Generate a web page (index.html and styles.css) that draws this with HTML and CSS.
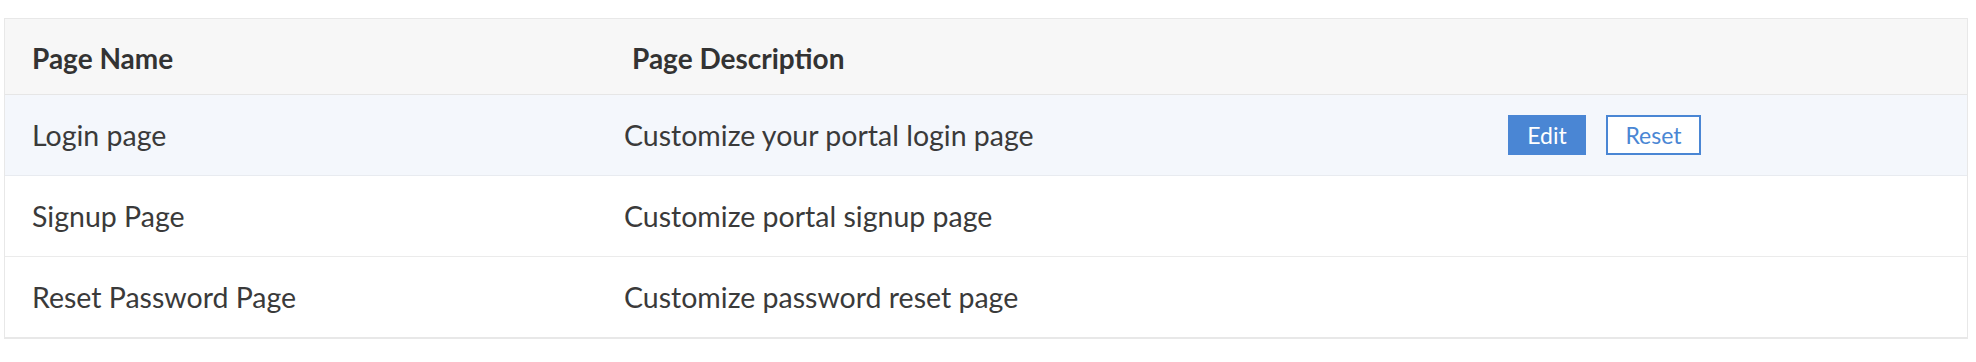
FILE: index.html
```html
<!DOCTYPE html>
<html lang="en">
<head>
<meta charset="utf-8">
<title>Portal Pages</title>
<link rel="stylesheet" href="styles.css">
</head>
<body>
  <div class="page">
    <div class="table">
      <div class="row head">
        <div class="cell">Page Name</div>
        <div class="cell desc-head">Page Description</div>
        <div class="cell"></div>
      </div>
      <div class="row active">
        <div class="cell">Login page</div>
        <div class="cell">Customize your portal login page</div>
        <div class="cell actions">
          <button class="btn btn-primary">Edit</button>
          <button class="btn btn-outline">Reset</button>
        </div>
      </div>
      <div class="row">
        <div class="cell">Signup Page</div>
        <div class="cell">Customize portal signup page</div>
        <div class="cell"></div>
      </div>
      <div class="row">
        <div class="cell">Reset Password Page</div>
        <div class="cell">Customize password reset page</div>
        <div class="cell"></div>
      </div>
    </div>
  </div>
</body>
</html>
```

FILE: styles.css
```css
html, body {
  margin: 0;
  padding: 0;
  background: #ffffff;
}

body {
  font-family: "Lato", "Open Sans", "Liberation Sans", sans-serif;
  color: #3a3a3a;
}

.page {
  padding: 18px 8px 0 4px;
}

.table {
  border: 1px solid #e8e8e8;
  border-bottom-width: 2px;
}

.row {
  display: grid;
  grid-template-columns: 592px 884px 1fr;
  align-items: center;
  height: 80px;
  border-top: 1px solid #ebebeb;
  font-size: 28.5px;
}

.row.head {
  height: 75px;
  border-top: 0;
  border-bottom: 1px solid #e6e6e6;
  background: #f7f7f7;
  font-weight: 700;
  font-size: 28px;
  color: #333333;
}

.row.head .cell {
  padding-top: 2px;
}

.row.head + .row {
  border-top: 0;
}

.row.active {
  background: #f4f7fc;
  border-bottom: 1px solid #e8ebf0;
}

.row.active + .row {
  border-top: 0;
}

.cell {
  padding-left: 27px;
}

.row.head .desc-head {
  padding-left: 35px;
}

.actions {
  display: flex;
  gap: 20px;
}

.btn {
  font-family: inherit;
  font-size: 23px;
  height: 40px;
  box-sizing: border-box;
  border-radius: 0;
  cursor: pointer;
  padding: 0;
}

.btn-primary {
  width: 78px;
  background: #4a86d4;
  border: 1px solid #4a86d4;
  color: #ffffff;
}

.btn-outline {
  width: 95px;
  background: #ffffff;
  border: 2px solid #4a86d4;
  color: #4a86d4;
}
```
